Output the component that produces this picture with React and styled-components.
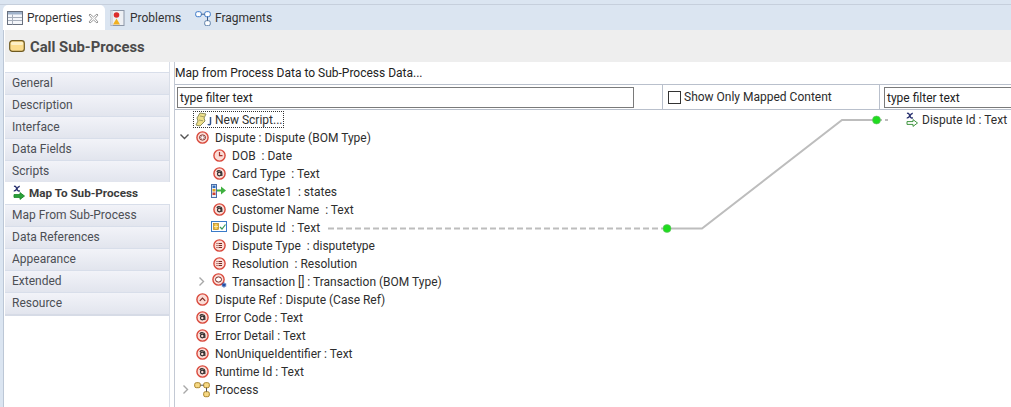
import React from "react";
import styled, { createGlobalStyle } from "styled-components";

const Global = createGlobalStyle`
  html, body { margin: 0; padding: 0; background: #fff; }
  body { font-family: Roboto, "Noto Sans", sans-serif; font-size: 12px; color: #2b2b2b; }
  svg { flex: none; }
`;

const Page = styled.div`
  position: relative;
  width: 1011px;
  height: 407px;
  overflow: hidden;
  background: #dbe5f1;
  display: flex;
  flex-direction: column;
`;
const TabBar = styled.div`
  height: 26px;
  margin-top: 4px;
  padding-left: 3px;
  border-top: 1px solid #c6cfdc;
  box-sizing: border-box;
  display: flex;
  align-items: stretch;
  flex: none;
`;
const Tab = styled.div`
  display: flex;
  align-items: center;
  width: ${p => p.$w}px;
  height: ${p => (p.$active ? 26 : 25)}px;
  gap: 4px;
  padding: 0 6px 0 ${p => (p.$active ? 4 : 5)}px;
  background: ${p => (p.$active ? "#fff" : "transparent")};
  border-radius: ${p => (p.$active ? "5px 5px 0 0" : "0")};
  color: #333;
  box-sizing: border-box;
  white-space: nowrap;
`;
const Close = styled.span`
  display: inline-flex;
  margin-left: auto;
`;
const Window = styled.div`
  flex: 1;
  margin-left: 3px;
  background: #fff;
  border-left: 1px solid #bcc7d6;
  padding-left: 1px;
  display: flex;
  flex-direction: column;
  min-height: 0;
`;
const Header = styled.div`
  height: 32px;
  flex: none;
  background: #eeeeee;
  display: flex;
  align-items: center;
  gap: 5px;
  padding-left: 4px;
  font-weight: 700;
  font-size: 14.8px;
  color: #4a4a4a;
`;
const HeaderTitle = styled.span`
  padding-top: 2px;
`;
const Body = styled.div`
  flex: 1;
  display: flex;
  min-height: 0;
`;
const Sidebar = styled.div`
  width: 164px;
  flex: none;
  padding-top: 10px;
  border-right: 1px solid #d9dee8;
  margin-right: 4px;
  display: flex;
  flex-direction: column;
`;
const SideItem = styled.div`
  height: 22px;
  box-sizing: border-box;
  display: flex;
  align-items: center;
  gap: 3px;
  padding-left: 7px;
  padding-bottom: 1px;
  border-top: 1px solid #d8deea;
  color: #4c4f55;
  font-weight: ${p => (p.$active ? 700 : 400)};
  font-size: ${p => (p.$active ? 11.7 : 12)}px;
  background: ${p => (p.$active ? "#fff" : "linear-gradient(#f2f3f8, #e2e5ee)")};
  ${p => p.$active && "color:#3c3c3c;border-top:none;margin-right:-1px;"}
`;
const SideEnd = styled.div`
  height: 2px;
  background: #d6dbe6;
`;
const Main = styled.div`
  flex: 1;
  min-width: 0;
  border-left: 1px solid #c3c9d4;
  display: flex;
  flex-direction: column;
`;
const Title = styled.div`
  height: 22px;
  flex: none;
  display: flex;
  align-items: center;
  color: #222;
`;
const FilterBar = styled.div`
  height: 26px;
  flex: none;
  box-sizing: border-box;
  border-top: 1px solid #b9c0cc;
  border-bottom: 1px solid #b9c0cc;
  display: flex;
  align-items: center;
`;
const FilterInput = styled.div`
  height: 21px;
  box-sizing: border-box;
  width: ${p => p.$w}px;
  margin-left: ${p => p.$ml}px;
  flex: none;
  border: 1px solid #7a7a7a;
  background: #fff;
  padding: 1px 0 0 2px;
  display: flex;
  align-items: center;
  color: #222;
`;
const CheckCell = styled.div`
  margin-left: 28px;
  width: 218px;
  height: 100%;
  flex: none;
  box-sizing: border-box;
  border-left: 1px solid #b9c0cc;
  border-right: 1px solid #b9c0cc;
  display: flex;
  align-items: center;
  gap: 3px;
  padding-left: 5px;
`;
const Box = styled.span`
  width: 13px;
  height: 13px;
  box-sizing: border-box;
  border: 1px solid #333;
  flex: none;
`;
const Tree = styled.div`
  position: relative;
  flex: 1;
`;
const Row = styled.div`
  height: 18px;
  display: flex;
  align-items: center;
  padding-left: ${p => p.$indent}px;
  white-space: pre;
  color: #2e2e2e;
`;
const RowText = styled.span`
  padding-top: 2px;
`;
const RowIcon = styled.span`
  width: 16px;
  height: 16px;
  flex: none;
  margin-right: ${p => p.$gap ?? 5}px;
  display: inline-flex;
  align-items: center;
  justify-content: center;
`;
const Twisty = styled.span`
  width: 11px;
  height: 16px;
  flex: none;
  margin-right: ${p => p.$gap}px;
  display: inline-flex;
  align-items: center;
  justify-content: center;
`;
const ScriptBtn = styled.span`
  display: inline-flex;
  align-items: center;
  height: 17px;
  padding: 0 1px;
  border: 1px dotted #333;
  gap: 2px;
  box-sizing: border-box;
`;
const Wires = styled.svg`
  position: absolute;
  left: 0;
  top: 0;
  pointer-events: none;
`;
const TargetRow = styled.div`
  position: absolute;
  top: 0;
  left: 730px;
  height: 18px;
  display: flex;
  align-items: center;
  gap: 3px;
  white-space: pre;
  color: #2e2e2e;
`;

const Ring = ({ children }) => (
  <svg width="13" height="13" viewBox="0 0 13 13">
    <circle cx="6.5" cy="6.5" r="5.6" fill="#fbdcd6" stroke="#d9483b" strokeWidth="1.4" />
    {children}
  </svg>
);
const AtIcon = () => (
  <Ring>
    <circle cx="6.3" cy="7" r="1.8" fill="none" stroke="#2a2a2a" strokeWidth="1.2" />
    <path d="M3.8 4.8C5 3.2 8.6 3.3 8.8 5.8V9" fill="none" stroke="#2a2a2a" strokeWidth="1.2" />
  </Ring>
);
const ClockIcon = () => (
  <Ring>
    <path d="M6.5 3v3.7h3" fill="none" stroke="#a8302a" strokeWidth="1.2" />
  </Ring>
);
const ListIcon = () => (
  <Ring>
    <path d="M5.5 4.5h3.5M5.5 6.5h3.5M5.5 8.5h3.5M3.5 4.5h1M3.5 6.5h1M3.5 8.5h1" stroke="#7a2a22" strokeWidth="1.1" />
  </Ring>
);
const BomIcon = () => (
  <Ring>
    <ellipse cx="6.5" cy="6.5" rx="3" ry="2.6" fill="#fff" stroke="#7a2a22" strokeWidth="1" />
    <path d="M5.7 5.4L4.7 6.5l1 1.1M7.3 5.4l1 1.1-1 1.1" fill="none" stroke="#7a2a22" strokeWidth="0.8" />
  </Ring>
);
const BomStarIcon = () => (
  <svg width="16" height="16" viewBox="0 0 16 16">
    <circle cx="6.5" cy="6.5" r="5.6" fill="#fbdcd6" stroke="#d9483b" strokeWidth="1.4" />
    <ellipse cx="6.5" cy="6.5" rx="3" ry="2.6" fill="#fff" stroke="#7a2a22" strokeWidth="1" />
    <path d="M12 9.5v5M9.8 10.8l4.4 2.4M14.2 10.8l-4.4 2.4" stroke="#1f4fa8" strokeWidth="1.2" />
  </svg>
);
const CaseRefIcon = () => (
  <Ring>
    <path d="M3.8 7.8l2.7-2.7 2.7 2.7" fill="none" stroke="#7a2a22" strokeWidth="1.2" />
  </Ring>
);
const StateIcon = () => (
  <svg width="16" height="14" viewBox="0 0 16 14">
    <rect x="0.5" y="0.5" width="5" height="13" fill="#e8eef7" stroke="#4a6fa8" />
    <rect x="1.5" y="1.5" width="3" height="2.5" fill="#2f6fc0" />
    <rect x="1.5" y="5" width="3" height="2.5" fill="#e0a020" />
    <rect x="1.5" y="8.5" width="3" height="2.5" fill="#d04030" />
    <path d="M6 5.5h4V2.5l5 4-5 4V7.5H6z" fill="#3fb03f" />
  </svg>
);
const FieldIcon = () => (
  <svg width="16" height="12" viewBox="0 0 16 12">
    <rect x="0.5" y="0.5" width="15" height="10" fill="#fff" stroke="#3a7bc8" />
    <rect x="2.5" y="2.5" width="5" height="6" fill="#eab52e" stroke="#a87a10" strokeWidth="0.6" />
    <path d="M3 5.5h4M5 3v5" stroke="#fff3c8" strokeWidth="0.8" />
    <path d="M9 6l2 2 3.5-4.5" fill="none" stroke="#3a9a58" strokeWidth="1.2" />
  </svg>
);
const ProcessIcon = () => (
  <svg width="17" height="17" viewBox="0 0 17 17">
    <rect x="0.7" y="1.7" width="5.6" height="5" rx="1.6" fill="#f7d984" stroke="#a9842a" />
    <rect x="9.7" y="1.7" width="5.6" height="5" rx="1.6" fill="#f7d984" stroke="#a9842a" />
    <rect x="9.7" y="10.7" width="5.6" height="5" rx="1.6" fill="#f7d984" stroke="#a9842a" />
    <path d="M6.3 4.2h3.4M12.5 6.7v4" stroke="#555" />
  </svg>
);
const FragmentsIcon = () => (
  <svg width="16" height="16" viewBox="0 0 16 16">
    <rect x="0.7" y="1.7" width="5.6" height="5" rx="1.8" fill="#fff" stroke="#3a78c8" />
    <rect x="9.7" y="1.7" width="5.6" height="5" rx="1.8" fill="#fff" stroke="#3a78c8" />
    <rect x="9.7" y="10.7" width="5.6" height="5" rx="1.8" fill="#fff" stroke="#5d7fa8" />
    <path d="M6.3 4.2h3.4M12.5 6.7v4" stroke="#3a5a88" />
  </svg>
);
const PropertiesIcon = () => (
  <svg width="16" height="14" viewBox="0 0 16 14">
    <rect x="0.5" y="0.5" width="15" height="13" fill="#f4f6fa" stroke="#68707e" />
    <rect x="1" y="1" width="14" height="2.5" fill="#9fb2ca" />
    <path d="M5.5 3.5v10M1 6.5h14M1 9.5h14" stroke="#a6aebb" />
  </svg>
);
const ProblemsIcon = () => (
  <svg width="16" height="16" viewBox="0 0 16 16">
    <rect x="1" y="0.5" width="13" height="15" fill="#eef0f4" stroke="#8d97a8" />
    <rect x="0.5" y="0.5" width="2.5" height="15" fill="#d5dae3" />
    <circle cx="6.5" cy="5" r="2.8" fill="#dc2b2b" />
    <path d="M6.5 8.5l3.5 6H3z" fill="#f0b020" />
  </svg>
);
const CloseIcon = () => (
  <svg width="11" height="11" viewBox="0 0 11 11">
    <path d="M1 2l1-1 3.5 3L9 1l1 1-3 3.5L10 9l-1 1-3.5-3L2 10 1 9l3-3.5z" fill="#fff" stroke="#8d8d8d" strokeWidth="0.9" />
  </svg>
);
const TaskIcon = () => (
  <svg width="16" height="12" viewBox="0 0 16 12">
    <rect x="0.7" y="0.7" width="14.6" height="10.6" rx="2.6" fill="#fbdc8c" stroke="#6f5a20" strokeWidth="1.2" />
    <rect x="2" y="2" width="12" height="3" rx="1.2" fill="#fdf0c6" />
  </svg>
);
const ChevronDown = () => (
  <svg width="11" height="8" viewBox="0 0 11 8">
    <path d="M1.5 1.5l4 4 4-4" fill="none" stroke="#555" strokeWidth="1.4" />
  </svg>
);
const ChevronRight = () => (
  <svg width="8" height="11" viewBox="0 0 8 11">
    <path d="M1.5 1.5l4 4-4 4" fill="none" stroke="#a8a8a8" strokeWidth="1.4" />
  </svg>
);
const MapIcon = ({ arrow, fill }) => (
  <svg width="14" height="15" viewBox="0 0 14 15">
    <path d="M2 1.5c1.5-.8 2 .4 2.8 2.3s1.4 2.8 3 1.8M7.8 1.5c-1.2-.4-2.1.8-3 2.3s-1.6 2.7-3 1.9" fill="none" stroke="#27306e" strokeWidth="1.4" />
    <path d="M2 9.6h6V7.6l4.5 3.4L8 14.4v-2H2z" fill={fill} stroke={arrow} strokeWidth="0.9" />
  </svg>
);
const ScriptIcon = () => (
  <svg width="18" height="15" viewBox="0 0 18 15">
    <path d="M5 1l6 1-2 4 1 3-5 5-4-1 2-4-1-3z" fill="#efe08a" stroke="#8e8e5c" />
    <path d="M5 4l4 .8M4 8l4 .8" stroke="#a5a060" />
    <path d="M15.5 5v6.5c0 1.6-2 1.6-2.6.6" fill="none" stroke="#33538c" strokeWidth="1.5" />
  </svg>
);

const sideItems = [
  "General", "Description", "Interface", "Data Fields", "Scripts", "Map To Sub-Process",
  "Map From Sub-Process", "Data References", "Appearance", "Extended", "Resource",
];

const rows = [
  { indent: 4, twisty: "down", tg: 4, icon: <BomIcon />, text: "Dispute : Dispute (BOM Type)" },
  { indent: 36, icon: <ClockIcon />, text: "DOB  : Date" },
  { indent: 36, icon: <AtIcon />, text: "Card Type  : Text" },
  { indent: 36, icon: <StateIcon />, text: "caseState1  : states" },
  { indent: 36, icon: <AtIcon />, text: "Customer Name  : Text" },
  { indent: 36, icon: <FieldIcon />, text: "Dispute Id  : Text" },
  { indent: 36, icon: <ListIcon />, text: "Dispute Type  : disputetype" },
  { indent: 36, icon: <ListIcon />, text: "Resolution  : Resolution" },
  { indent: 21, twisty: "right", tg: 5, ig: 4, icon: <BomStarIcon />, text: "Transaction [] : Transaction (BOM Type)" },
  { indent: 19, icon: <CaseRefIcon />, text: "Dispute Ref : Dispute (Case Ref)" },
  { indent: 19, icon: <AtIcon />, text: "Error Code : Text" },
  { indent: 19, icon: <AtIcon />, text: "Error Detail : Text" },
  { indent: 19, icon: <AtIcon />, text: "NonUniqueIdentifier : Text" },
  { indent: 19, icon: <AtIcon />, text: "Runtime Id : Text" },
  { indent: 5, twisty: "right", tg: 3, icon: <ProcessIcon />, text: "Process" },
];

export default function App() {
  return (
    <Page>
      <Global />
      <TabBar>
        <Tab $active $w={102}>
          <PropertiesIcon />
          Properties
          <Close><CloseIcon /></Close>
        </Tab>
        <Tab $w={85}><ProblemsIcon />Problems</Tab>
        <Tab $w={90}><FragmentsIcon />Fragments</Tab>
      </TabBar>
      <Window>
        <Header><TaskIcon /><HeaderTitle>Call Sub-Process</HeaderTitle></Header>
        <Body>
          <Sidebar>
            {sideItems.map(s => (
              <SideItem key={s} $active={s === "Map To Sub-Process"}>
                {s === "Map To Sub-Process" && <MapIcon arrow="#1c8a2a" fill="#2aa03a" />}
                {s}
              </SideItem>
            ))}
            <SideEnd />
          </Sidebar>
          <Main>
            <Title>Map from Process Data to Sub-Process Data...</Title>
            <FilterBar>
              <FilterInput $w={457} $ml={2}>type filter text</FilterInput>
              <CheckCell><Box />Show Only Mapped Content</CheckCell>
              <FilterInput $w={140} $ml={4}>type filter text</FilterInput>
            </FilterBar>
            <Tree>
              <Row $indent={18}>
                <ScriptBtn><ScriptIcon /><RowText>New Script...</RowText></ScriptBtn>
              </Row>
              {rows.map(r => (
                <Row key={r.text} $indent={r.indent}>
                  {r.twisty && (
                    <Twisty $gap={r.tg}>{r.twisty === "down" ? <ChevronDown /> : <ChevronRight />}</Twisty>
                  )}
                  <RowIcon $gap={r.ig}>{r.icon}</RowIcon>
                  <RowText>{r.text}</RowText>
                </Row>
              ))}
              <Wires width="836" height="140" viewBox="0 0 836 140">
                <path d="M153 118.5H492" stroke="#bdbdbd" strokeWidth="2" strokeDasharray="6 3" fill="none" />
                <path d="M492 118.5H527L667 10H701" stroke="#bdbdbd" strokeWidth="2" fill="none" />
                <path d="M701 10H713" stroke="#bdbdbd" strokeWidth="2" strokeDasharray="6 3" fill="none" />
                <circle cx="492" cy="118.5" r="4" fill="#1fdc1f" stroke="#6bbf6b" strokeWidth="0.6" />
                <circle cx="701.5" cy="10" r="4" fill="#1fdc1f" stroke="#6bbf6b" strokeWidth="0.6" />
              </Wires>
              <TargetRow>
                <MapIcon arrow="#2b8a2b" fill="#fff" />
                <RowText>Dispute Id : Text</RowText>
              </TargetRow>
            </Tree>
          </Main>
        </Body>
      </Window>
    </Page>
  );
}
